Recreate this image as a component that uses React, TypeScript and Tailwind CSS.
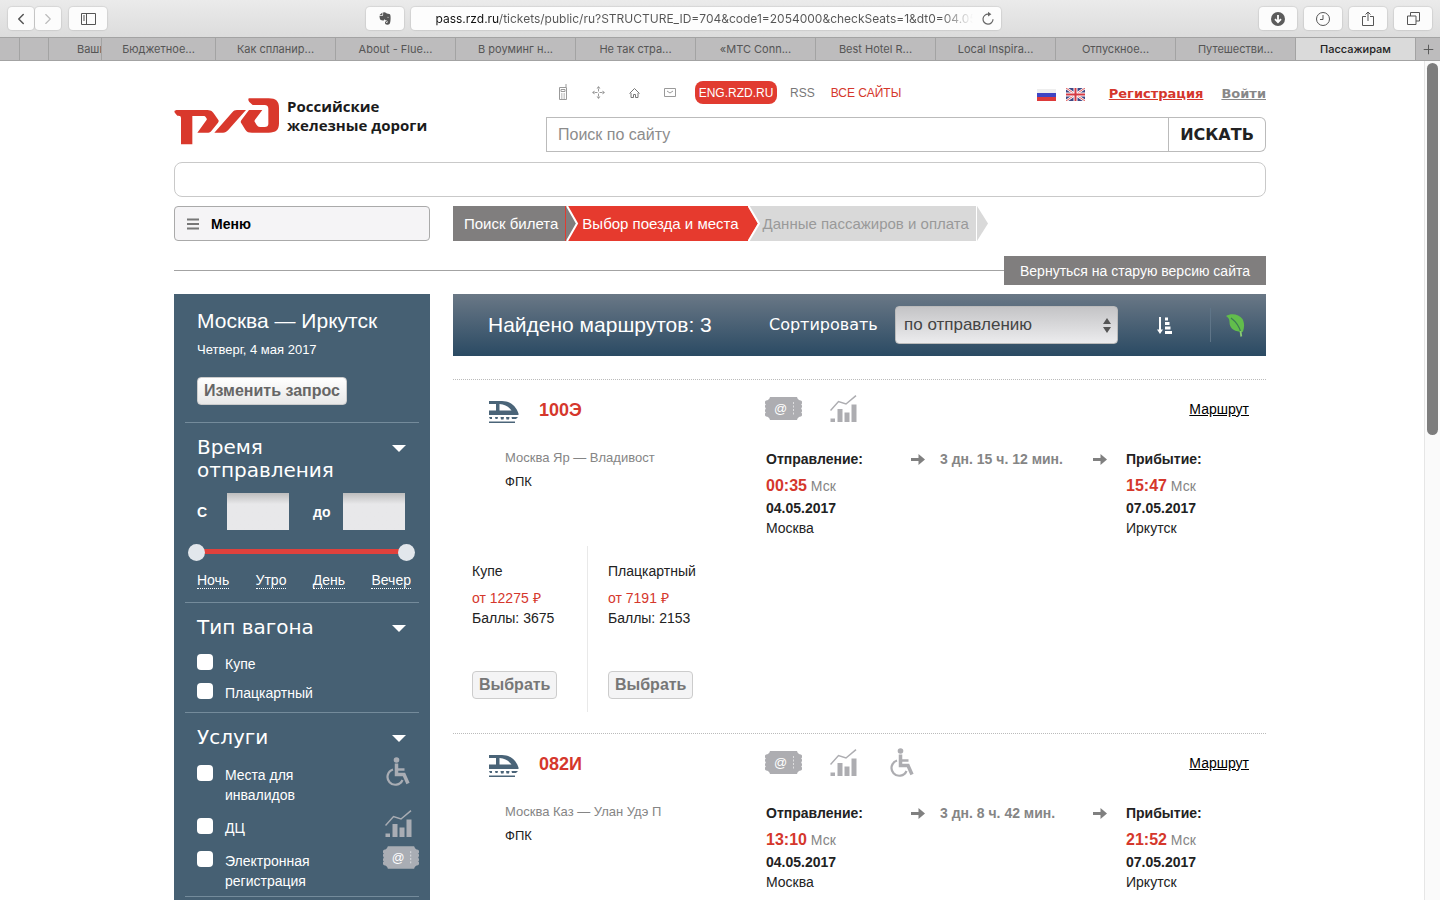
import type { ReactNode } from "react";
import { ChevronLeft, ChevronRight, Plus } from "lucide-react";

interface Cabin {
  name: string;
  price: number;
  points: number;
}

interface Stop {
  time: string;
  date: string;
  city: string;
}

interface Train {
  number: string;
  route: string;
  carrier: string;
  duration: string;
  accessible: boolean;
  departure: Stop;
  arrival: Stop;
  cabins: Cabin[];
}

const trains: Train[] = [
  {
    number: "100Э",
    route: "Москва Яр — Владивост",
    carrier: "ФПК",
    duration: "3 дн. 15 ч. 12 мин.",
    accessible: false,
    departure: { time: "00:35", date: "04.05.2017", city: "Москва" },
    arrival: { time: "15:47", date: "07.05.2017", city: "Иркутск" },
    cabins: [
      { name: "Купе", price: 12275, points: 3675 },
      { name: "Плацкартный", price: 7191, points: 2153 },
    ],
  },
  {
    number: "082И",
    route: "Москва Каз — Улан Удэ П",
    carrier: "ФПК",
    duration: "3 дн. 8 ч. 42 мин.",
    accessible: true,
    departure: { time: "13:10", date: "04.05.2017", city: "Москва" },
    arrival: { time: "21:52", date: "07.05.2017", city: "Иркутск" },
    cabins: [],
  },
];

const tabs = [
  "Как спланир...",
  "About - Flue...",
  "В роуминг н...",
  "Не так стра...",
  "«МТС Conn...",
  "Best Hotel R...",
  "Local Inspira...",
  "Отпускное...",
  "Путешестви...",
];

export default function App() {
  return (
    <div className="flex h-screen flex-col overflow-hidden bg-white font-['Liberation_Sans',Arial,sans-serif] text-sm text-[#222]">
      <BrowserToolbar />
      <BrowserTabs />
      <div className="relative min-h-0 flex-1 overflow-hidden">
        <div className="mx-auto max-w-[1092px]">
          <SiteHeader />
          <div className="mt-[10px] h-[35px] rounded-lg border border-[#c9c9c9]" />
          <div className="mt-[9px] flex gap-[23px]">
            <button className="flex h-[35px] w-[256px] items-center gap-3 rounded border border-[#aaa] bg-[#f5f4f6] px-3 text-sm font-bold text-black">
              <svg width="12" height="12" className="text-[#777]">
                <path d="M0 1.5h12M0 6h12M0 10.5h12" stroke="currentColor" strokeWidth="2" />
              </svg>
              Меню
            </button>
            <Steps />
          </div>
          <div className="mt-[15px] flex items-center">
            <div className="h-px flex-1 bg-[#a3a3a3]" />
            <button className="h-[29px] bg-[#807e7e] px-4 text-sm text-white">Вернуться на старую версию сайта</button>
          </div>
          <div className="mt-[9px] flex items-start gap-[23px]">
            <Filters />
            <main className="min-w-0 flex-1">
              <SortBar />
              <div className="mt-[23px]">
                {trains.map((t) => (
                  <TrainCard key={t.number} train={t} />
                ))}
              </div>
            </main>
          </div>
        </div>
        <div className="absolute inset-y-0 right-0 w-4 border-l border-[#e6e6e6] bg-[#fafafa] pt-[2px] pl-[2px]">
          <div className="h-[372px] w-[11px] rounded-full bg-[#7d7d7d]" />
        </div>
      </div>
    </div>
  );
}

function ToolButton({ label, wide, children }: { label: string; wide?: boolean; children: ReactNode }) {
  return (
    <button
      aria-label={label}
      className={`flex h-[23px] items-center justify-center rounded bg-[#fcfcfc] text-[#555] shadow-[0_0_1px_1px_rgba(0,0,0,0.08)] ${wide ? "w-[38px]" : "w-[26px]"}`}
    >
      {children}
    </button>
  );
}

function BrowserToolbar() {
  return (
    <div className="flex h-[37px] shrink-0 items-center bg-linear-to-b from-[#ebebeb] to-[#dcdcdc] px-2">
      <div className="flex gap-px">
        <ToolButton label="Назад">
          <ChevronLeft size={18} strokeWidth={2} />
        </ToolButton>
        <ToolButton label="Вперёд">
          <ChevronRight size={18} strokeWidth={1.5} className="text-[#bbb]" />
        </ToolButton>
      </div>
      <div className="ml-2">
        <ToolButton label="Боковая панель" wide>
          <svg width="15" height="12" fill="none" stroke="currentColor">
            <path d="M.5 .5h14v11H.5zM5.5 .5v11M2 3h2M2 5h2M2 7h2" />
          </svg>
        </ToolButton>
      </div>
      <div className="flex-1" />
      <ToolButton label="Evernote" wide>
        <svg width="12" height="13" viewBox="0 0 12 13" fill="currentColor">
          <path d="M3.4 .4 .6 3.1h2.2c.4 0 .6-.2.6-.6zM4.1.4v2.5c0 .6-.4.9-.9.9H.5c0 1.700.5 3.900 1.300 4.300.8.4 2.700.5 3.100.2.3-.2.3-.8.3-1.200.4 1 1.200 1.200 2.300 1.300.9.1 1.200.7 1 2.100-.1.5-.9.6-1.300.3-.3-.3 0-1 .7-.9V8.900c-1.400 0-1.900.8-1.900 1.900 0 1.300.8 1.900 2.400 1.900 2 0 2.700-1 3-3.500.3-2.400.3-4.900-.1-6.200-.2-.9-1.500-1.200-3.600-1.400C7.300.8 6.500.4 5.300.3zM8.300 5.500c.1-.9 1.300-.9 1.500.2-.5-.2-1-.2-1.500-.2z" />
        </svg>
      </ToolButton>
      <div className="ml-[7px] flex h-[23px] w-[590px] items-center rounded bg-[#fdfdfd] pr-[5px] pl-[25px] shadow-[0_0_1px_1px_rgba(0,0,0,0.08)]">
        {/* host part is darker, the tail fades out under the reload button */}
        <input
          aria-label="Адрес"
          readOnly
          value="pass.rzd.ru/tickets/public/ru?STRUCTURE_ID=704&code1=2054000&checkSeats=1&dt0=04.05.2017"
          className="w-[537px] bg-[linear-gradient(90deg,#111_63px,#555_63px,#555_505px,transparent_537px)] bg-clip-text font-[Inter,sans-serif] text-xs text-transparent outline-none"
        />
        <button aria-label="Обновить" className="ml-auto text-[#666]">
          <svg width="16" height="16" viewBox="0 0 16 16" fill="none" stroke="currentColor" strokeWidth="1.2">
            <path d="M8.500 3.200a5 5 0 1 0 4.500 5" />
            <path d="M8 .8v4.800l3.400-2.400z" fill="currentColor" stroke="none" />
          </svg>
        </button>
      </div>
      <div className="flex-1" />
      <div className="flex gap-[7px]">
        <ToolButton label="Загрузки" wide>
          <svg width="14" height="14" viewBox="0 0 14 14">
            <circle cx="7" cy="7" r="7" fill="#5c5c5c" />
            <path d="M7 3v7M4 7.200l3 3 3-3" fill="none" stroke="#fff" strokeWidth="1.800" />
          </svg>
        </ToolButton>
        <ToolButton label="История" wide>
          <svg width="14" height="14" viewBox="0 0 14 14" fill="none" stroke="currentColor">
            <circle cx="7" cy="7" r="6.500" />
            <path d="M7 3v4.500H4" />
          </svg>
        </ToolButton>
        <ToolButton label="Поделиться" wide>
          <svg width="12" height="16" viewBox="0 0 12 16" fill="none" stroke="currentColor">
            <path d="M4 5.500H.5v9h11v-9H8M6 10V1M3.500 3.500 6 1l2.500 2.500" />
          </svg>
        </ToolButton>
        <ToolButton label="Вкладки" wide>
          <svg width="13" height="13" viewBox="0 0 13 13" fill="none" stroke="currentColor">
            <path d="M.5 4h8.500v8.500H.5zM3.500 4V.5h9V9H9" />
          </svg>
        </ToolButton>
      </div>
    </div>
  );
}

function BrowserTabs() {
  return (
    <div className="flex h-6 shrink-0 border-y border-[#a3a3a3] bg-[#bdbcbd] font-[Inter,sans-serif] text-[11px] leading-[22px] text-[#555]">
      <div className="w-5 border-r border-[#a3a3a3]" />
      <div className="w-[29px] border-r border-[#a3a3a3]" />
      <button className="w-[53px] overflow-hidden border-r border-[#a3a3a3] pl-7 text-left">Ваши</button>
      <button className="w-[114px] border-r border-[#a3a3a3]">Бюджетное...</button>
      {tabs.map((t) => (
        <button key={t} className="min-w-0 flex-1 truncate border-r border-[#a3a3a3]">
          {t}
        </button>
      ))}
      <button className="min-w-0 flex-1 truncate border-r border-[#a3a3a3] bg-[#dadada] font-medium text-[#222]">Пассажирам</button>
      <button aria-label="Новая вкладка" className="flex w-6 items-center justify-center">
        <Plus size={15} strokeWidth={1.5} />
      </button>
    </div>
  );
}

function SiteHeader() {
  return (
    <header className="flex items-start justify-between">
      <a href="#" className="mt-9 flex items-start gap-2">
        <svg width="105" height="48" viewBox="522 290 315 144" fill="#d9382c">
          <path d="M534 329h84c14 0 18 3 24 11l13 19c2 3 1 5-1 8l-20 25c-3 4-5 5-9 5h-33l27-37c2-3 2-4 0-7-3-5-5-6-10-6h-32v85h-34v-78c0-6-2-8-8-8h-3l-7-8c-4-6-1-9 9-9z" />
          <path d="M643 397l54-61c4-5 7-7 14-7h27l-54 61c-5 5-8 7-15 7z" />
          <path d="M748 294h58c22 0 31 9 31 29v46c0 20-9 28-31 28h-50c-10 0-15-2-20-9l-12-19c-3-4-2-7 1-11l22-29h40l-22 29c-2 3-2 5 0 8l5 8c3 4 5 6 10 6h14c7 0 11-3 11-9v-46c0-7-4-11-11-11h-36l-10-9c-4-5-4-11 0-11z" />
        </svg>
        <div className="font-['Open_Sans','Noto_Sans',sans-serif] text-[15px] leading-[19px] font-bold text-[#1b1b1b]">
          Российские
          <br />
          железные дороги
        </div>
      </a>
      <div className="w-[720px]">
        <div className="mt-5 flex h-[23px] items-center text-[#9a9a9a]">
          <div className="flex w-[149px] items-center gap-6 pl-3">
            <svg width="10" height="17" viewBox="0 0 10 17" fill="none" stroke="currentColor">
              <path d="M1.500 3.500h7v12h-7zM8 3V0M3 5.500h4v2H3z" />
              <path d="M3 10h4M3 12h4M3 14h4" strokeDasharray="1 .5" />
            </svg>
            <svg width="13" height="13" viewBox="0 0 13 13" fill="currentColor">
              <path d="M6.500 0 8.500 2.500h-4zM6.500 13l2-2.500h-4zM0 6.500l2.500-2v4zM13 6.500l-2.500-2v4z" />
              <path d="M6.500 3v2.500M6.500 7.500V10M3 6.500h2.500M7.500 6.500H10" stroke="currentColor" />
            </svg>
            <svg width="11" height="10" viewBox="0 0 11 10" fill="none" stroke="#777">
              <path d="M.5 5.500l5-5 5 5M2 5v4.500h2.500v-3h2v3H9V5" />
            </svg>
            <svg width="12" height="9" viewBox="0 0 12 9" fill="none" stroke="currentColor">
              <path d="M.5 .5h11v8H.5zM3 3l3 2 3-2" />
            </svg>
          </div>
          <a href="#" className="flex h-[23px] w-[82px] items-center justify-center rounded-lg bg-[#e13b30] text-xs text-white">
            ENG.RZD.RU
          </a>
          <a href="#" className="ml-[13px] text-xs text-[#777]">
            RSS
          </a>
          <a href="#" className="ml-4 text-xs text-[#d5372c]">
            ВСЕ САЙТЫ
          </a>
          <div className="ml-auto flex items-center pt-1 font-['DejaVu_Sans',Verdana,sans-serif] text-[13px] font-bold">
            <svg width="19" height="12" className="mr-[10px]">
              <rect width="19" height="4" fill="#eee" />
              <rect y="4" width="19" height="4" fill="#3f45c4" />
              <rect y="8" width="19" height="4" fill="#dd3a3a" />
            </svg>
            <svg width="19" height="13" viewBox="0 0 19 13">
              <rect width="19" height="13" fill="#3f4785" />
              <path d="M0 0l19 13M19 0L0 13" stroke="#fff" strokeWidth="2.500" />
              <path d="M0 0l19 13M19 0L0 13" stroke="#d33" strokeWidth=".8" />
              <path d="M9.500 0v13M0 6.500h19" stroke="#fff" strokeWidth="4" />
              <path d="M9.500 0v13M0 6.500h19" stroke="#d43a44" strokeWidth="2" />
            </svg>
            <a href="#" className="ml-6 text-[#d5372c] underline">
              Регистрация
            </a>
            <a href="#" className="ml-[18px] text-[#888] underline">
              Войти
            </a>
          </div>
        </div>
        <form className="mt-[13px] flex h-[35px]">
          <input
            type="search"
            aria-label="Поиск по сайту"
            placeholder="Поиск по сайту"
            className="min-w-0 flex-1 border border-[#bbb] px-[11px] text-base outline-none placeholder:text-[#8c8c8c]"
          />
          <button
            type="button"
            className="w-[97px] rounded-r-md border border-l-0 border-[#bbb] font-['DejaVu_Sans',Verdana,sans-serif] text-base font-bold text-[#222]"
          >
            ИСКАТЬ
          </button>
        </form>
      </div>
    </header>
  );
}

function Steps() {
  return (
    <ol className="flex h-[35px] text-[15px] leading-[35px] whitespace-nowrap">
      <li className="relative z-20 border-r border-[#e13b30] bg-[#807e7e] pr-[7px] pl-[11px] text-white">
        Поиск билета
        <svg width="13" height="35" className="absolute top-0 left-full ml-px">
          <path d="M0 0h1l10 17.500L1 35H0z" fill="#807e7e" />
          <path d="M1 0l10 17.500L1 35" fill="none" stroke="#fff" strokeWidth="2" />
        </svg>
      </li>
      <li className="relative z-10 bg-[#e63a2e] pr-[9px] pl-4 text-white">
        Выбор поезда и места
        <svg width="14" height="35" className="absolute top-0 left-full">
          <path d="M0 0l10 17.500L0 35z" fill="#e63a2e" />
          <path d="M0 -1l11 18.500L0 36" fill="none" stroke="#fff" strokeWidth="2" />
        </svg>
      </li>
      <li className="relative bg-[#d9d9d9] pr-[7px] pl-[15px] text-[#999]">
        Данные пассажиров и оплата
        <svg width="12" height="35" className="absolute top-0 left-full">
          <path d="M1 0l11 17.500L1 35z" fill="#d9d9d9" />
        </svg>
      </li>
    </ol>
  );
}

function SectionTitle({ children }: { children: ReactNode }) {
  return (
    <button className="flex w-full items-start justify-between pr-[13px] text-left font-['DejaVu_Sans',Verdana,sans-serif] text-xl leading-[23px]">
      <span className="w-[150px]">{children}</span>
      <svg width="14" height="7" className="mt-[9px]">
        <path d="M0 0h14L7 7z" fill="#fff" />
      </svg>
    </button>
  );
}

function Check({ label, icon }: { label: string; icon?: ReactNode }) {
  return (
    <div className="flex items-start">
      <label className="flex w-[150px] items-start gap-3 leading-5">
        <input type="checkbox" className="size-4 shrink-0 appearance-none rounded bg-white" />
        {label}
      </label>
      {icon && <span className="-mt-2 ml-auto flex h-7 w-9 items-center justify-center text-[#a9adb4]">{icon}</span>}
    </div>
  );
}

function Filters() {
  const thumb =
    "pointer-events-none absolute inset-0 h-[17px] w-full appearance-none bg-transparent [&::-webkit-slider-thumb]:pointer-events-auto [&::-webkit-slider-thumb]:size-[17px] [&::-webkit-slider-thumb]:appearance-none [&::-webkit-slider-thumb]:rounded-full [&::-webkit-slider-thumb]:bg-[#e2e7ec]";
  return (
    <aside className="w-[256px] shrink-0 bg-[#466073] px-[11px] pt-[13px] pb-10 text-white">
      <div className="px-3 pb-[17px]">
        <h1 className="text-[21px] leading-7">Москва — Иркутск</h1>
        <p className="mt-[5px] text-[13px] leading-5">Четверг, 4 мая 2017</p>
        <button className="mt-[17px] h-7 rounded-sm border border-[#ccc] bg-linear-to-b from-white to-[#e8e8e8] px-[6px] text-base font-bold text-[#666]">
          Изменить запрос
        </button>
      </div>
      <section className="border-t border-[#748b9b] pt-[13px] pb-3 pl-3">
        <SectionTitle>Время отправления</SectionTitle>
        <div className="mt-[11px] flex items-center font-bold">
          <label htmlFor="from" className="w-[30px]">
            С
          </label>
          <input id="from" className="h-[37px] w-[62px] bg-linear-to-b from-[#bdbdbd] to-[#e8e8ea] to-30% px-2 text-[#333] outline-none" />
          <label htmlFor="to" className="ml-6 w-[30px]">
            до
          </label>
          <input id="to" className="h-[37px] w-[62px] bg-linear-to-b from-[#bdbdbd] to-[#e8e8ea] to-30% px-2 text-[#333] outline-none" />
        </div>
        <div className="relative mt-[14px] mr-1 -ml-[9px] h-[17px] pt-[5px]">
          <div className="mx-2 h-[5px] bg-[#e0413c]" />
          <input type="range" aria-label="Не раньше" min={0} max={24} defaultValue={0} className={thumb} />
          <input type="range" aria-label="Не позже" min={0} max={24} defaultValue={24} className={thumb} />
        </div>
        <div className="mt-[9px] flex justify-between pr-2 leading-5">
          {["Ночь", "Утро", "День", "Вечер"].map((p) => (
            <a key={p} href="#">
              <span className="border-b border-dotted border-white">{p}</span>
            </a>
          ))}
        </div>
      </section>
      <section className="border-t border-[#748b9b] pt-[13px] pb-[9px] pl-3">
        <SectionTitle>Тип вагона</SectionTitle>
        <div className="mt-[15px] flex flex-col gap-[9px]">
          <Check label="Купе" />
          <Check label="Плацкартный" />
        </div>
      </section>
      <section className="border-t border-[#748b9b] pt-[13px] pb-[5px] pl-3">
        <SectionTitle>Услуги</SectionTitle>
        <div className="mt-4 flex flex-col gap-[13px]">
          <Check label="Места для инвалидов" icon={<WheelchairIcon />} />
          <Check label="ДЦ" icon={<ChartIcon />} />
          <Check label="Электронная регистрация" icon={<TicketIcon />} />
        </div>
      </section>
      <div className="border-t border-[#748b9b]" />
    </aside>
  );
}

function SortBar() {
  return (
    <div className="flex h-[62px] items-center bg-linear-to-b from-[#6a7886] to-[#2a4a63] pr-[21px] pl-[35px] text-white">
      <h2 className="w-[281px] text-[21px]">Найдено маршрутов: 3</h2>
      <label htmlFor="sort" className="w-[126px] font-['DejaVu_Sans',Verdana,sans-serif] text-base">
        Сортировать
      </label>
      <div className="relative">
        <select
          id="sort"
          className="h-[38px] w-[223px] appearance-none rounded border border-[#bbb] bg-linear-to-b from-[#c4c4c6] to-[#ececee] px-2 text-[17px] text-[#444] outline-none"
        >
          <option>по отправлению</option>
          <option>по прибытию</option>
        </select>
        <svg width="8" height="15" className="pointer-events-none absolute top-3 right-[7px]">
          <path d="M0 6l4-6 4 6zM0 9l4 6 4-6z" fill="#555" />
        </svg>
      </div>
      <button aria-label="Порядок сортировки" className="ml-[39px]">
        <svg width="16" height="17" viewBox="0 0 16 17" fill="none" stroke="#fff" strokeWidth="3">
          <path d="M8 2h3M8 6.500h4.500M8 11h5.500M8 15.500h7" />
          <path d="M3 0v14" strokeWidth="2" />
          <path d="M0 12.500h6L3 17z" fill="#fff" stroke="none" />
        </svg>
      </button>
      <div className="mr-[15px] ml-auto h-[34px] w-px bg-[#5f7588]" />
      <button aria-label="Эко">
        <svg width="19" height="23" viewBox="0 0 19 23">
          <path d="M0 2C5-1 13 0 16.500 5c2 4 2 8 .5 12.500-1 .8-2 .8-3 .3C7 17 3.500 13.500 3.500 8 3.500 5 2.500 3.500 0 2z" fill="#62bd4c" />
          <path d="M5 4c4 3 8.500 8 10 15" fill="none" stroke="#3c7a55" strokeWidth="1.200" />
          <path d="M14.500 17l.8 5.500" stroke="#8acb74" strokeWidth="1.800" />
        </svg>
      </button>
    </div>
  );
}

function TrainCard({ train }: { train: Train }) {
  return (
    <article className="border-t border-dotted border-[#bbb] pb-[21px]">
      <div className="flex h-[60px] items-center pr-[17px] pl-9">
        <div className="flex w-[276px] items-center gap-5">
          <TrainIcon />
          <h3 className="text-lg font-bold text-[#d5372c]">{train.number}</h3>
        </div>
        <div className="flex flex-1 items-center gap-7 pb-[3px] text-[#adadb1]">
          <TicketIcon />
          <ChartIcon />
          {train.accessible && <WheelchairIcon />}
          <a href="#" className="ml-auto text-black underline">
            Маршрут
          </a>
        </div>
      </div>
      <div className="grid grid-cols-[313px_145px_182px_33px_1fr] pt-[9px] leading-5">
        <div className="-mt-[3px] pl-[52px] text-[13px] leading-6">
          <p className="text-[#858585]">{train.route}</p>
          <p>{train.carrier}</p>
        </div>
        <StopInfo title="Отправление:" stop={train.departure} />
        <div className="flex h-5 items-center gap-[15px] font-bold text-[#858585]">
          <ArrowIcon />
          {train.duration}
        </div>
        <div className="flex h-5 items-center text-[#858585]">
          <ArrowIcon />
        </div>
        <StopInfo title="Прибытие:" stop={train.arrival} />
      </div>
      <div className="mt-2 flex leading-5">
        {train.cabins.map((c) => (
          <div key={c.name} className="w-[134px] border-l border-[#e9e9e9] pt-[15px] pb-[13px] pl-5 first:border-l-0 first:pl-[19px]">
            <p>{c.name}</p>
            <p className="mt-[7px] text-[#d5372c]">от {c.price} ₽</p>
            <p>Баллы: {c.points}</p>
            <button className="mt-[43px] h-7 rounded-sm border border-[#ccc] bg-[#f4f4f5] px-[6px] text-base font-bold text-[#777]">Выбрать</button>
          </div>
        ))}
      </div>
    </article>
  );
}

function StopInfo({ title, stop }: { title: string; stop: Stop }) {
  return (
    <div>
      <p className="font-bold">{title}</p>
      <p className="mt-[5px] leading-6 text-[#858585]">
        <b className="text-base text-[#d5372c]">{stop.time}</b> Мск
      </p>
      <p className="font-bold">{stop.date}</p>
      <p>{stop.city}</p>
    </div>
  );
}

function ArrowIcon() {
  return (
    <svg width="14" height="11" viewBox="0 0 14 11" fill="#808080">
      <path d="M0 4h7.500V0L14 5.500 7.500 11V7H0z" />
    </svg>
  );
}

function TrainIcon() {
  return (
    <svg width="30" height="27" viewBox="0 -4 30 27" fill="#4a6478">
      <path d="M0 0h13c8 0 14 5 16.500 12.500V14H0v-4.500h7V3H0zM10.500 3v6.500h12C19.500 5.500 16 3.500 10.500 3z" fillRule="evenodd" />
      <path d="M0 16h3v2H1zM6 16h3l-.5 2h-2zM11.500 16h3.500l-.5 2.500h-2.500zM17 16h3.500l-.5 2.500h-2.500zM22.500 16h6.500l-2 2h-4z" />
      <path d="M0 20.500h26V22H0z" />
    </svg>
  );
}

function TicketIcon() {
  return (
    <svg width="37" height="23" viewBox="0 0 37 23">
      <path
        d="M5 0h27c.5 2 2 3.500 4 3.500l1 1v2l-.8 1 .8 1v1.500l-.8 1.500.8 1.500V14.500l-.8 1 .8 1v2l-1 1c-2 0-3.500 1.500-4 3.500H5c-.5-2-2-3.500-4-3.500l-1-1v-2l.8-1-.8-1V13l.8-1.500L0 10V8.500l.8-1-.8-1v-2l1-1C3 3.500 4.500 2 5 0z"
        fill="currentColor"
      />
      <text x="15.500" y="16" textAnchor="middle" fontSize="13" fill="#fff">
        @
      </text>
      <path d="M28.500 5v14" stroke="#fff" strokeWidth=".6" strokeDasharray="2 1.500" />
    </svg>
  );
}

function ChartIcon() {
  return (
    <svg width="32" height="28" viewBox="0 0 32 28" fill="currentColor">
      <path d="M.5 15.500 8.500 6.500l7.500 2.500L26 .7" fill="none" stroke="currentColor" strokeWidth="1.500" />
      <path d="M.5 23.500h4.500V27H.5zM7.500 14h5v13h-5zM14.500 17.500h5V27h-5zM21.500 9.500h5V27h-5z" />
    </svg>
  );
}

function WheelchairIcon() {
  return (
    <svg width="30" height="29" viewBox="0 0 30 29" fill="none" stroke="currentColor">
      <circle cx="10.500" cy="3" r="2.800" fill="currentColor" stroke="none" />
      <path d="M10.500 6.500V17.500h7.500l4 9" strokeWidth="3.500" />
      <path d="M11 12.500h7.500" strokeWidth="2.500" />
      <path d="M7 12.500a7.800 7.800 0 1 0 9.500 10.500" strokeWidth="2.200" />
    </svg>
  );
}
